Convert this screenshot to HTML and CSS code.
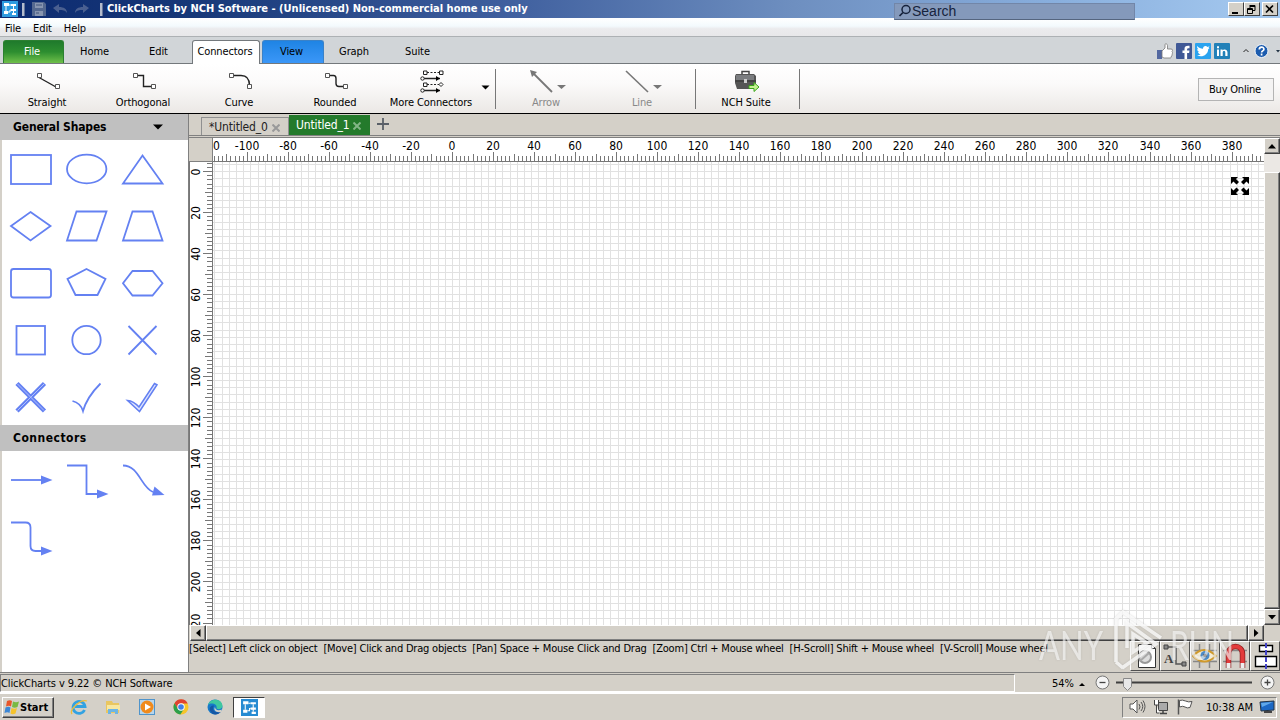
FILE: index.html
```
<!DOCTYPE html>
<html lang="en">
<head>
    <meta charset="UTF-8">
    <meta name="viewport" content="width=device-width, initial-scale=1.0">
    <title>ClickCharts by NCH Software</title>
    <link rel="stylesheet" href="styles.css">
</head>
<body>
<div class="desktop">

    <!-- Title bar -->
    <div class="titlebar">
        <svg class="app-icon" width="16" height="16" viewBox="0 0 16 16"><rect width="16" height="16" fill="#2f9be0"/><path d="M2 2h5v3H2zM9 3h5v2H9zM2 10h4v3H2zM9 8h5v2H9zM10 12h4v2h-4z" fill="#fff"/><path d="M4 5v5M7 4h2M11.500 5v7M6 11h2V9h1" stroke="#fff" fill="none"/></svg>
        <span class="title-sep"></span>
        <svg class="quick" width="66" height="18" viewBox="0 0 66 18">
            <path d="M2 2h12l2 2v12H2z" fill="#54688f"/><path d="M5 3h8v5H5zM5 11h8v5H5z" fill="#8795b0"/><path d="M6 5h6M6 13h3" stroke="#40547d"/>
            <path d="M23 8l6-4v3c5 0 8 2 8 6-2-3-4-3-8-3v3z" fill="#4a5f90"/>
            <path d="M59 8l-6-4v3c-5 0-8 2-8 6 2-3 4-3 8-3v3z" fill="#4a5f90"/>
        </svg>
        <span class="title-sep"></span>
        <span class="title-text">ClickCharts by NCH Software - (Unlicensed) Non-commercial home use only</span>
        <div class="window-buttons">
            <button><svg width="13" height="11" viewBox="0 0 13 11"><path d="M3 8h6v2H3z"/></svg></button>
            <button><svg width="13" height="11" viewBox="0 0 13 11"><path d="M5 1.500h5v5H8M5 2.500h5M5 1v3M2.500 4.500h5v5h-5zM2 5.500h6" fill="none" stroke="#000"/></svg></button>
            <button class="close"><svg width="13" height="11" viewBox="0 0 13 11"><path d="M3 1.500l7 7M10 1.500l-7 7" stroke="#000" stroke-width="1.700"/></svg></button>
        </div>
        <div class="search">
            <svg width="14" height="14" viewBox="0 0 14 14"><circle cx="8" cy="5.500" r="4" fill="none" stroke="#16233d" stroke-width="1.500"/><path d="M5 8.500L1.500 12" stroke="#16233d" stroke-width="1.700"/></svg>
            <span>Search</span>
        </div>
    </div>

    <div class="menubar"><span>File</span><span>Edit</span><span>Help</span></div>

    <!-- Ribbon tabs -->
    <div class="tabs">
        <span class="tab tab-file">File</span>
        <span class="tab tab-home">Home</span>
        <span class="tab tab-edit">Edit</span>
        <span class="tab tab-active">Connectors</span>
        <span class="tab tab-view">View</span>
        <span class="tab tab-graph">Graph</span>
        <span class="tab tab-suite">Suite</span>
        <div class="social">
            <svg width="16" height="16" viewBox="0 0 16 16"><path d="M0 7h5v9H0z" fill="#5368a0"/><path d="M5 14V8l3-3V1.500c0-1 2.500-1 2.500 1V6H14c2 0 2 2 1 2.500 1 1 .5 2 0 2.500.5 1 0 2-.7 2 .2 1.500-.5 2-1.300 2H7z" fill="#fff" stroke="#777" stroke-width=".8"/></svg>
            <svg width="16" height="16" viewBox="0 0 16 16"><rect width="16" height="16" rx="1" fill="#3f5896"/><path d="M8.500 16v-6H6.500V7.500h2V6c0-2.500 1.300-3.500 5-3.200v2.400c-2 0-2.400 0-2.400 1v1.300h2.400l-.4 2.500h-2v6z" fill="#fff"/></svg>
            <svg width="16" height="16" viewBox="0 0 16 16"><rect width="16" height="16" rx="1" fill="#2aa3ef"/><path d="M2 3c2 2 3.500 2.700 6 2.800C7.800 3 11 2 12.500 4l2-.7-1 1.700 1 0-1.300 1.300C13 12 7 15 2 12.300c1.500 0 2.600-.3 3.600-1C4 11 3.300 10 3 9h1.300C3 8.500 2.200 7.500 2.300 6l1.200.3C2 5 2 4 2 3z" fill="#fff"/></svg>
            <svg width="16" height="16" viewBox="0 0 16 16"><rect width="16" height="16" rx="1" fill="#2381b8"/><path d="M3 6.500h2V13H3zM3 3.300h2v2H3zM6.500 6.500h2v1c1-1.500 5-1.800 5 2V13h-2.200V9.500c0-2-2.600-1.700-2.600 0V13H6.500z" fill="#fff"/></svg>
            <svg class="collapse" width="8" height="16" viewBox="0 0 8 16"><path d="M1.500 9L4 6.500 6.500 9" fill="none" stroke="#222"/></svg>
            <svg class="help" width="15" height="16" viewBox="0 0 15 16"><circle cx="7.500" cy="8" r="6.500" fill="#1c5cae" stroke="#f2f6fb"/><path d="M5.300 6.500c0-3 4.600-3 4.600-.3 0 1.600-2.300 1.700-2.300 3.200M7.600 10.500v2" fill="none" stroke="#fff" stroke-width="1.700"/></svg>
            <svg width="6" height="16" viewBox="0 0 6 16"><path d="M1 7h4L3 9.500z" fill="#234"/></svg>
        </div>
    </div>

    <!-- Toolbar -->
    <div class="toolbar">
        <div class="tool"><svg width="26" height="24" viewBox="0 -1 26 24"><path d="M5 7.500l17 9.500" stroke="#222" stroke-width="1.400"/><path d="M3.500 3.500h4v4h-4zM21.500 14.500h4v4h-4z" fill="#fff" stroke="#555"/></svg><span>Straight</span></div>
        <div class="tool"><svg width="26" height="24" viewBox="0 -1 26 24"><path d="M7 5.500h6.500v11H22" fill="none" stroke="#222" stroke-width="1.400"/><path d="M3.500 3.500h4v4h-4zM21.500 14.500h4v4h-4z" fill="#fff" stroke="#555"/></svg><span>Orthogonal</span></div>
        <div class="tool"><svg width="26" height="24" viewBox="0 -1 26 24"><path d="M7 5.500h8c6 0 8.500 4 8.500 10" fill="none" stroke="#222" stroke-width="1.400"/><path d="M3.500 3.500h4v4h-4zM21.500 14.500h4v4h-4z" fill="#fff" stroke="#555"/></svg><span>Curve</span></div>
        <div class="tool"><svg width="26" height="24" viewBox="0 -1 26 24"><path d="M7 5.500h4.500q2.500 0 2.500 3v5q0 3 3 3h5" fill="none" stroke="#222" stroke-width="1.400"/><path d="M3.500 3.500h4v4h-4zM21.500 14.500h4v4h-4z" fill="#fff" stroke="#555"/></svg><span>Rounded</span></div>
        <div class="tool"><svg width="26" height="24" viewBox="-1 0 26 24"><path d="M8 3.500h13M8 15.500h13" stroke="#222" stroke-dasharray="2 1.500"/><path d="M4 9.500h17M4 21.500h17" stroke="#222" stroke-width="1.500"/><path d="M4.500 2h3.500v3.500H4.500zM20.500 2H24v3.500h-3.500zM4.500 14h3.500v3.500H4.500zM22 13.500l2 2-2 2-2-2z" fill="#fff" stroke="#222"/><circle cx="3.500" cy="9.500" r="1.700" fill="#fff" stroke="#222"/><circle cx="3.500" cy="21.500" r="1.700" fill="#fff" stroke="#222"/><path d="M17 7l4 2.500-4 2.500zM17 19l4 2.500-4 2.500z"/></svg><span>More Connectors</span></div>
        <svg class="drop" width="15" height="50" viewBox="0 0 15 50"><path d="M1.500 22.500h8L5.500 26.500z"/></svg>
        <span class="tool-sep"></span>
        <div class="tool disabled"><svg width="40" height="24" viewBox="0 0 40 24"><path d="M6 3l20 20" stroke="#777" stroke-width="1.800"/><path d="M4 1l7 2-5 5z" fill="#777"/><path d="M31 16h9l-4.500 4z" fill="#777"/></svg><span>Arrow</span></div>
        <div class="tool disabled"><svg width="40" height="24" viewBox="0 0 40 24"><path d="M4 2l22 21" stroke="#777" stroke-width="1.600"/><path d="M31 16h9l-4.500 4z" fill="#777"/></svg><span>Line</span></div>
        <span class="tool-sep gap"></span>
        <div class="tool"><svg width="26" height="24" viewBox="0 0 26 24"><path d="M9 5V2.500h7V5" fill="none" stroke="#444" stroke-width="1.500"/><path d="M3 5h18l2 2v7l-1 6H4L2 14V7z" fill="#555"/><path d="M3 6h18v5H3z" fill="#7b7d80"/><path d="M2 12h21" stroke="#333"/><path d="M11 10h3v4h-3z" fill="#ccc"/><path d="M16 16.500h5v-3l5 4.500-5 4.500v-3h-5z" fill="#c4f28f" stroke="#3aa51a"/></svg><span>NCH Suite</span></div>
        <span class="tool-sep gap"></span>
        <button class="buy">Buy Online</button>
    </div>

    <div class="main">
        <!-- Shape palette -->
        <div class="sidebar">
            <div class="side-head">General Shapes<svg width="10" height="6" viewBox="0 0 10 6"><path d="M0 0.500h10L5 5.500z"/></svg></div>
            <div class="shapes">
                <svg viewBox="0 0 56 57"><rect x="9" y="15" width="40" height="29"/></svg>
                <svg viewBox="0 0 56 57"><ellipse cx="28.700" cy="29" rx="19.700" ry="14.300"/></svg>
                <svg viewBox="0 0 56 57"><path d="M28.500 15.500L48.500 43.500H9z"/></svg>
                <svg viewBox="0 0 56 57"><path d="M28.500 15L48.500 29 28.500 43.500 9 29z"/></svg>
                <svg viewBox="0 0 56 57"><path d="M18.500 14.500h30l-10 29H9z"/></svg>
                <svg viewBox="0 0 56 57"><path d="M18.500 14.500h20l10 29H9z"/></svg>
                <svg viewBox="0 0 56 57"><rect x="9" y="15" width="40" height="28.500" rx="2.500"/></svg>
                <svg viewBox="0 0 56 57"><path d="M28.500 15L47.500 25 39.500 41h-22l-8-16z"/></svg>
                <svg viewBox="0 0 56 57"><path d="M18.500 17h20l10 12.200-10 12.300h-20L9 29.200z"/></svg>
                <svg viewBox="0 0 56 57"><rect x="14.500" y="15" width="28.500" height="28.500"/></svg>
                <svg viewBox="0 0 56 57"><circle cx="28.500" cy="29" r="14.200"/></svg>
                <svg viewBox="0 0 56 57"><path d="M14.500 15l28 28.500M42.500 15l-28 28.500"/></svg>
                <svg viewBox="0 0 56 57"><path class="thick" d="M15 15.500l27.500 27.500M42.500 15.500L15 43"/><path class="core" d="M15.500 16l26.500 26.500M42 16L15.500 42.500"/></svg>
                <svg viewBox="0 0 56 57"><path d="M14.500 33q8 2 10.500 10Q29 29 42.500 15.500"/></svg>
                <svg viewBox="0 0 56 57"><path class="check" d="M13.500 32.500q6 .5 11.500 6.500L40.500 15.500l2.500 1.200L25.500 43.500z"/></svg>
            </div>
            <div class="side-head side-connectors">Connectors</div>
            <div class="shapes">
                <svg viewBox="0 0 56 57"><path d="M9 29h32"/><path class="head" d="M39 24.500L50.500 29 39 33.500z"/></svg>
                <svg viewBox="0 0 56 57"><path d="M9 14.500h19.500v28.500H40"/><path class="head" d="M39 38.500L50.500 43 39 47.500z"/></svg>
                <svg viewBox="0 0 56 57"><path d="M9 14.500c16 0 18 22 30 26.500"/><path class="head" d="M40.500 35.500l10 8.500-12.500.5z"/></svg>
                <svg viewBox="0 0 56 57"><path d="M9 14.500h14.500q5 0 5 5V38q0 5 5 5H40"/><path class="head" d="M39 38.500L50.500 43 39 47.500z"/></svg>
            </div>
        </div>

        <!-- Drawing area -->
        <div class="work">
            <div class="doc-tabs">
                <span class="doc-tab">*Untitled_0<svg width="8" height="8" viewBox="0 0 8 8"><path d="M.5.500l7 7M7.500.500l-7 7"/></svg></span>
                <span class="doc-tab doc-active">Untitled_1<svg width="8" height="8" viewBox="0 0 8 8"><path d="M.5.500l7 7M7.500.500l-7 7"/></svg></span>
                <svg class="plus" width="12" height="12" viewBox="0 0 12 12"><path d="M6 0v12M0 6h12" stroke="#5a6068" stroke-width="1.800"/></svg>
            </div>
            <div class="canvas-grid">
                <div class="corner"></div>
                <svg class="ruler-h" id="rulerH" width="1051" height="24"></svg>
                <div class="scroll-v">
                    <span class="sbtn"><svg width="8" height="5" viewBox="0 0 8 5"><path d="M4 0l4 4.500H0z"/></svg></span>
                    <span class="track"></span>
                    <span class="thumb"></span>
                    <span class="sbtn"><svg width="8" height="5" viewBox="0 0 8 5"><path d="M0 0h8L4 4.500z"/></svg></span>
                </div>
                <svg class="ruler-v" id="rulerV" width="23" height="463"></svg>
                <div class="canvas">
                    <svg id="grid" width="1051" height="463"></svg>
                    <svg class="fullscreen" width="18" height="18" viewBox="0 0 18 18"><path d="M0 0h7L5 2l3 3-2.500 2.500L2.500 4.500 0 7zM18 0h-7l2 2-3 3 2.500 2.500 3-3L18 7zM0 18h7l-2-2 3-3-2.500-2.500-3 3L0 11zM18 18h-7l2-2-3-3 2.500-2.500 3 3L18 11z"/></svg>
                </div>
                <div class="scroll-h">
                    <span class="sbtn"><svg width="5" height="8" viewBox="0 0 5 8"><path d="M4.500 0v8L0 4z"/></svg></span>
                    <span class="thumb"></span>
                    <span class="sbtn"><svg width="5" height="8" viewBox="0 0 5 8"><path d="M0 0v8l4.500-4z"/></svg></span>
                </div>
            </div>
            <div class="hints">
                <span class="hint-text">[Select] Left click on object&nbsp; [Move] Click and Drag objects&nbsp; [Pan] Space + Mouse Click and Drag&nbsp; [Zoom] Ctrl + Mouse wheel&nbsp; [H-Scroll] Shift + Mouse wheel&nbsp; [V-Scroll] Mouse wheel</span>
                <div class="toggles">
                    <span><svg width="26" height="26" viewBox="0 0 26 26"><path d="M6.500 1.500h13l4 4v19h-17z" fill="#fff" stroke="#333"/><path d="M19.500 1.500v4h4" fill="none" stroke="#333"/><circle cx="13" cy="14" r="6" fill="#ddd" stroke="#999" stroke-width="2"/><path d="M8 18l9-8" stroke="#aaa" stroke-width="2"/></svg></span>
                    <span><svg width="26" height="26" viewBox="0 0 26 26"><path d="M5 4h9v17h8" fill="none" stroke="#555" stroke-width="1.500"/><path d="M2 2h4v4H2zM20 19h4v4h-4z" fill="#888" stroke="#444"/><text x="2" y="20" class="glyph">A</text></svg></span>
                    <span><svg width="26" height="26" viewBox="0 0 26 26"><path d="M7.500 1v24M17.500 1v24M1 7.500h24M1 18.500h24" stroke="#888" stroke-width="1.500"/><path d="M1 13q11-12 23 0-12 11-23 0z" fill="#f5ecd4" stroke="#d19a2b" stroke-width="1.800"/><circle cx="13" cy="12.500" r="4.500" fill="#4a8bc9"/><circle cx="13" cy="12.500" r="1.800"/></svg></span>
                    <span><svg width="26" height="26" viewBox="0 0 26 26"><path d="M1 7.500h24M1 18.500h24" stroke="#888" stroke-width="1.500"/><path d="M6.500 25V11c0-10 14-10 14 0v14" fill="none" stroke="#8f2020" stroke-width="5.500"/><path d="M6.500 20V11c0-10 14-10 14 0v9" fill="none" stroke="#e33b3b" stroke-width="4"/><path d="M4.500 20h4v5h-4zM18.500 20h4v5h-4z" fill="#eee"/></svg></span>
                    <span><svg width="26" height="26" viewBox="0 0 26 26"><path d="M7.500 2.500h13v6h-13zM3.500 13.500h21v10h-21z" fill="#fff" stroke="#000" stroke-width="1.400"/><path d="M14 0v26" stroke="#4444c8" stroke-width="2" stroke-dasharray="5 2"/></svg></span>
                </div>
            </div>
        </div>
    </div>

    <!-- Status bar -->
    <div class="status">
        <div class="status-text">ClickCharts v 9.22 © NCH Software</div>
        <div class="zoom">
            <span>54%</span>
            <svg width="208" height="18" viewBox="0 0 208 18">
                <path d="M1 11h6L4 8z"/>
                <circle cx="24.500" cy="7.500" r="6.500" fill="#f4f4f4" stroke="#777"/><path d="M21.500 7.500h6" stroke="#444" stroke-width="1.300"/>
                <path d="M38 7.500h136" stroke="#3f3f3f" stroke-width="1.800"/>
                <path d="M45.500 3.500h8v8l-4 4-4-4z" fill="#e8e8e8" stroke="#888"/>
                <circle cx="189.500" cy="7.500" r="6.500" fill="#f4f4f4" stroke="#777"/><path d="M186.500 7.500h6M189.500 4.500v6" stroke="#444" stroke-width="1.300"/>
            </svg>
        </div>
    </div>

    <!-- Taskbar -->
    <div class="taskbar">
        <button class="start"><svg width="16" height="16" viewBox="0 0 16 16"><path d="M3 2q3-1.500 5 0L7 7.500Q5 6 2 7.500z" fill="#e8562a"/><path d="M9 2.500q3 1.500 6 0L13.500 8q-3 1.500-5.500 0z" fill="#79b942"/><path d="M1.500 8.500q3-1.500 5 0l-1 5.500q-2-1.500-5 0z" fill="#3c87d6"/><path d="M7.500 9q3 1.500 5.500 0l-1.500 5.500q-3 1.500-5 0z" fill="#f5c32c"/></svg>Start</button>
        <div class="launch">
            <svg width="18" height="18" viewBox="0 0 18 18"><path d="M14.500 12A6 6 0 1 1 15 8.500H5" fill="none" stroke="#32a2e2" stroke-width="2.800"/><path d="M2 16C-1 12 10 1 17 3" fill="none" stroke="#efbd37" stroke-width="1.300"/></svg>
            <svg width="18" height="18" viewBox="0 0 18 18"><path d="M2 3h6l1 2h6v10H2z" fill="#e9c660"/><path d="M3 7h13v5H3z" fill="#f8e7a0"/><path d="M4 16v-5h10v5h-3v-2H7v2z" fill="#6db5e4"/></svg>
            <svg width="18" height="18" viewBox="0 0 18 18"><rect x="1.500" y="1.500" width="15" height="15" fill="#b7d5ec" stroke="#4f94cb"/><circle cx="9" cy="9" r="6.500" fill="#f08a1c"/><path d="M7 5.500l6 3.500-6 3.500z" fill="#fff"/></svg>
            <svg width="18" height="18" viewBox="0 0 18 18"><circle cx="9" cy="9" r="7.500" fill="#f6c52b"/><path d="M2.500 5.200A7.500 7.500 0 0 1 15.800 5.500H9L5.700 11z" fill="#df4232"/><path d="M2.500 5.200A7.500 7.500 0 0 0 8.300 16.500L12 11H6z" fill="#2c9f4b"/><circle cx="9" cy="9" r="3.700" fill="#fff"/><circle cx="9" cy="9" r="2.800" fill="#3f7fe8"/></svg>
            <svg width="18" height="18" viewBox="0 0 18 18"><circle cx="9" cy="9" r="7.500" fill="#1679c9"/><path d="M2 7C4 0 16 0 16.500 8c0 3-4 4-6 2.500C12 6 5 4 2 7z" fill="#3fc7a0"/><path d="M7 10c0 4 4 5 8 3.500-3 4-9 4-11-1-1-3 1-5 4-5z" fill="#1557a4"/><path d="M9 9c0 3 3 4 7 2.500L15 14c-5 1-8-2-6-5z" fill="#d4d0c8"/></svg>
        </div>
        <div class="task-active"><svg width="17" height="17" viewBox="0 0 16 16"><rect width="16" height="16" fill="#278bd2"/><path d="M2 2h5v3H2zM9 3h5v2H9zM2 10h4v3H2zM9 8h5v2H9zM10 12h4v2h-4z" fill="#fff"/><path d="M4 5v5M7 4h2M11.500 5v7M6 11h2V9h1" stroke="#fff" fill="none"/></svg></div>
        <div class="tray">
            <svg width="18" height="18" viewBox="0 0 18 18"><path d="M2 6h3l4-4v13l-4-4H2z" fill="#fff" stroke="#555"/><path d="M11 6q2 3 0 5.500M13 4q3.500 4.500 0 9M15 2.500q4 6 0 12" fill="none" stroke="#555"/></svg>
            <svg width="18" height="18" viewBox="0 0 18 18"><path d="M6.500 4.500h9v8h-9z" fill="#aaa" stroke="#444"/><path d="M8 15.500h7M11 13v2" stroke="#444" stroke-width="1.500"/><path d="M2.500 2v5h4V2M4.500 7v8h3" fill="#fff" stroke="#444"/></svg>
            <svg width="18" height="18" viewBox="0 0 18 18"><path d="M2.500 1.500v15" stroke="#555" stroke-width="1.500"/><path d="M3.500 2.500q3-1 6 .5t6.500.5l-2 6q-3 1-5-.5t-5.500 0z" fill="#fff" stroke="#555"/></svg>
            <span>10:38 AM</span>
            <svg width="17" height="16" viewBox="0 0 17 16"><path d="M1 3l14-1v9l-13 1z" fill="#1c68c4" stroke="#234"/><path d="M2 4l12-1-11 5z" fill="#5fa8ea"/><path d="M5 13h8" stroke="#444" stroke-width="2"/></svg>
        </div>
    </div>

    <!-- Watermark over the lower right corner -->
    <svg class="watermark" width="204" height="66" viewBox="0 0 204 66">
        <text x="3" y="53" textLength="64" lengthAdjust="spacingAndGlyphs">ANY</text>
        <text x="134" y="53" textLength="64" lengthAdjust="spacingAndGlyphs">RUN</text>
        <path d="M80 55V12L87 5l38 26M91 41V16l29 21-34 24M80 55l7 6M97 27v18l14-9z"/>
    </svg>
</div>

<script>
    // pixels per ruler unit and where zero falls, relative to the canvas corner
    const UNIT = 2.0515;
    const ZERO_X = 239.5;
    const ZERO_Y = 9.7;
    const STEP = 7.2;

    function line(x1, y1, x2, y2) {
        return `M${x1} ${y1}L${x2} ${y2}`;
    }

    function snap(v) {
        return Math.floor(v) + 0.5;
    }

    function drawRulerH() {
        let d = "", labels = "";
        for (let n = -116; n <= 394; n += 2) {
            const x = snap(ZERO_X + n * UNIT);
            const len = n % 20 === 0 ? 9 : n % 10 === 0 ? 7 : 5;
            d += line(x, 23, x, 23 - len);
            if (n % 20 === 0) labels += `<text x="${x - 0.5}" y="12" text-anchor="middle">${n}</text>`;
        }
        labels += `<text x="0" y="12">0</text>`;
        document.getElementById("rulerH").innerHTML = `<path d="${d}"/>${labels}`;
    }

    function drawRulerV() {
        let d = "", labels = "";
        for (let n = -4; n <= 220; n += 2) {
            const y = snap(ZERO_Y + n * UNIT);
            const len = n % 20 === 0 ? 9 : n % 10 === 0 ? 7 : 5;
            d += line(22, y, 22 - len, y);
            if (n % 20 === 0) labels += `<text transform="translate(10 ${y + 0.5}) rotate(-90)" text-anchor="middle">${n}</text>`;
        }
        document.getElementById("rulerV").innerHTML = `<path d="${d}"/>${labels}`;
    }

    function drawGrid() {
        let d = "";
        for (let x = ZERO_X - 33 * STEP; x < 1051; x += STEP) d += line(snap(x), 0, snap(x), 463);
        for (let y = ZERO_Y - STEP; y < 463; y += STEP) d += line(0, snap(y), 1051, snap(y));
        document.getElementById("grid").innerHTML = `<path d="${d}"/>`;
    }

    drawRulerH();
    drawRulerV();
    drawGrid();
</script>
</body>
</html>
```
FILE: styles.css
```
* {
    box-sizing: border-box;
}
body {
    margin: 0;
    font-family: "DejaVu Sans Condensed", "DejaVu Sans", sans-serif;
    font-size: 11px;
    color: #000;
    overflow: hidden;
}
svg {
    display: block;
    flex: none;
}
button {
    font: inherit;
    padding: 0;
    border-radius: 0;
}
.desktop {
    position: relative;
    width: 1280px;
    height: 720px;
    display: flex;
    flex-direction: column;
    background: #d4d0c8;
    white-space: nowrap;
}

/* Title bar */
.titlebar {
    position: relative;
    height: 18px;
    flex: none;
    display: flex;
    align-items: center;
    padding: 0 2px;
    background: linear-gradient(90deg, #0c2a70 0%, #173878 15%, #3c5c9c 38%, #6e8fc0 62%, #88aedd 82%, #a6caf0 100%);
}
.title-sep {
    width: 3px;
    height: 13px;
    margin-left: 4px;
    background: #b4bccd;
    border-right: 1px solid #66769a;
}
.quick {
    margin-left: 5px;
}
.title-text {
    margin-left: 4px;
    padding-bottom: 2px;
    color: #fff;
    font-weight: bold;
}
.window-buttons {
    display: flex;
    margin-left: auto;
}
.window-buttons button {
    width: 16px;
    height: 14px;
    background: #d4d0c8;
    border: 1px solid;
    border-color: #fff #404040 #404040 #fff;
}
.window-buttons .close {
    margin-left: 2px;
}
.search {
    position: absolute;
    z-index: 2;
    left: 894px;
    top: 3px;
    width: 241px;
    height: 17px;
    display: flex;
    align-items: center;
    padding: 0 0 1px 3px;
    background: #8499bb;
    border: 1px solid #7286a8;
    border-bottom-color: #55657f;
    color: #16233d;
    font: 14px "Liberation Sans", Arial, sans-serif;
}

.menubar {
    height: 18px;
    flex: none;
    display: flex;
    align-items: center;
    gap: 12px;
    padding: 2px 0 0 5px;
    letter-spacing: -0.1px;
    background: linear-gradient(#fff, #f3fafd 45%, #ebebed 60%, #e8e8ea);
}

/* Ribbon tabs */
.tabs {
    height: 28px;
    flex: none;
    display: flex;
    align-items: flex-end;
    padding-left: 3px;
    background: #d1d5d8;
    border-top: 1px solid #adb1b4;
    border-bottom: 1px solid #73787c;
}
.tab {
    height: 23px;
    line-height: 24px;
    text-align: center;
    border-radius: 3px 3px 0 0;
    letter-spacing: -0.1px;
}
.tab-file {
    width: 61px;
    color: #fff;
    background: linear-gradient(#1f7a2c, #2d8e30 50%, #6fc04a);
    border: 1px solid #2b8031;
    border-bottom: none;
    line-height: 22px;
    padding-right: 3px;
}
.tab-home {
    width: 61px;
}
.tab-edit {
    width: 67px;
}
.tab-active {
    width: 68px;
    height: 24px;
    margin-bottom: -1px;
    padding-right: 2px;
    background: #fff;
    border: 1px solid #73787c;
    border-bottom: none;
    line-height: 22px;
}
.tab-view {
    width: 62px;
    margin-left: 2px;
    padding-right: 3px;
    background: linear-gradient(#1f84e4, #3b97f8);
    border: 1px solid #3a82c8;
    border-bottom: none;
    line-height: 22px;
}
.tab-graph {
    width: 60px;
}
.tab-suite {
    width: 67px;
}
.social {
    display: flex;
    align-items: center;
    gap: 3px;
    height: 24px;
    margin-left: auto;
    margin-right: -1px;
}
.social .collapse {
    margin-left: 9px;
}
.social .help {
    margin: 0 3px 0 1px;
}

/* Toolbar */
.toolbar {
    height: 50px;
    flex: none;
    display: flex;
    align-items: center;
    background: linear-gradient(#fff, #fbfafa 40%, #ebe8e5);
    border-bottom: 1px solid #000;
    padding-right: 6px;
}
.tool {
    width: 96px;
    display: flex;
    flex-direction: column;
    align-items: center;
    gap: 3px;
    margin: 2px 1px 0 -1px;
}
.tool span {
    line-height: 14px;
    letter-spacing: -0.1px;
}
.tool.disabled {
    color: #888;
}
.drop {
    position: relative;
    top: -1px;
}
.tool-sep {
    width: 1px;
    height: 40px;
    margin-right: 3px;
    background: #777;
}
.tool-sep.gap {
    margin-left: 4px;
}
.buy {
    width: 76px;
    height: 23px;
    margin: 2px 0 0 auto;
    padding-right: 2px;
    letter-spacing: -0.2px;
    background: #f4f3f3;
    border: 1px solid #b4b4b4;
}

.main {
    height: 558px;
    flex: none;
    display: flex;
}

/* Shape palette */
.sidebar {
    width: 189px;
    flex: none;
    background: #fff;
    border-left: 2px solid #d4d0c8;
    border-right: 1px solid #808080;
}
.side-head {
    height: 26px;
    margin-left: -2px;
    padding: 0 25px 0 13px;
    display: flex;
    align-items: center;
    justify-content: space-between;
    background: #c0c0c0;
    font-size: 12px;
    font-weight: bold;
    letter-spacing: -0.15px;
}
.side-connectors {
    letter-spacing: 0.5px;
}
.shapes {
    display: grid;
    grid-template-columns: repeat(3, 56px);
    grid-auto-rows: 57px;
}
.shapes svg {
    width: 56px;
    height: 57px;
    fill: none;
    stroke: #6481f2;
    stroke-width: 1.8;
}
.shapes .thick {
    stroke-width: 4.5;
}
.shapes .core {
    stroke: #b9c6ff;
    stroke-width: 0.9;
}
.shapes .check {
    fill: #dfe5ff;
    stroke-width: 1.5;
}
.shapes .head {
    fill: #6481f2;
    stroke: none;
}

/* Document tabs */
.work {
    flex: 1;
    min-width: 0;
    display: flex;
    flex-direction: column;
}
.doc-tabs {
    height: 24px;
    flex: none;
    display: flex;
    align-items: flex-end;
    padding: 0 0 2px 12px;
    border-bottom: 1px solid #808080;
    box-shadow: inset 0 -1px #d4d0c8, inset 0 -2px #808080;
}
.doc-tab {
    height: 18px;
    width: 88px;
    display: flex;
    align-items: center;
    justify-content: space-between;
    padding: 1px 8px 0 7px;
    border: 1px solid #909090;
    border-bottom: none;
    color: #222;
    font-size: 12px;
    letter-spacing: -0.15px;
}
.doc-tab svg {
    margin-top: 2px;
    stroke: #999;
    stroke-width: 2;
}
.doc-active {
    width: 81px;
    height: 20px;
    padding: 0 8px 1px 6px;
    background: #247a2b;
    border-color: #247a2b;
    color: #fff;
}
.doc-active svg {
    stroke: #83b586;
}
.plus {
    margin: 0 0 5px 7px;
}

/* Rulers and canvas */
.canvas-grid {
    display: grid;
    grid-template-columns: 24px 1051px 16px;
    grid-template-rows: 24px 463px 16px;
}
.corner {
    border-bottom: 1px solid #808080;
    border-right: 1px solid #808080;
}
.ruler-h,
.ruler-v {
    background: #fff;
    font-size: 12px;
}
.ruler-h path,
.ruler-v path {
    stroke: #777;
}
.ruler-h {
    border-bottom: 1px solid #777;
}
.ruler-v {
    width: 24px;
    border-right: 1px solid #777;
    border-left: 1px solid #777;
}
.canvas {
    position: relative;
    background: #fff;
}
.canvas path {
    stroke: #e1e1e1;
}
.canvas .fullscreen {
    position: absolute;
    right: 15px;
    top: 15px;
}
.fullscreen path {
    stroke: none;
}

/* Scroll bars */
.scroll-v {
    grid-row: 1 / 3;
    grid-column: 3;
    display: flex;
    flex-direction: column;
}
.scroll-h {
    grid-column: 1 / 3;
    display: flex;
    padding-left: 1px;
}
.sbtn,
.thumb {
    background: #d4d0c8;
    border: 1px solid;
    border-color: #fff #404040 #404040 #fff;
    box-shadow: inset -1px -1px #808080;
}
.sbtn {
    width: 16px;
    height: 16px;
    flex: none;
    display: flex;
    align-items: center;
    justify-content: center;
}
.thumb {
    flex: 1;
}
.track {
    height: 18px;
    background: #ebe8e4;
}

/* Hint line */
.hints {
    height: 31px;
    display: flex;
    justify-content: space-between;
}
.hint-text {
    line-height: 15px;
    letter-spacing: -0.2px;
}
.toggles {
    display: flex;
}
.toggles span {
    width: 30px;
    height: 30px;
    padding: 1px;
    border: 1px solid;
    border-color: #fff #505050 #505050 #fff;
}
.glyph {
    font: bold 13px "Liberation Serif", serif;
    fill: #444;
}

/* Status bar */
.status {
    height: 21px;
    flex: none;
    display: flex;
    border-top: 1px solid #808080;
    border-bottom: 1px solid #fff;
}
.status-text {
    width: 1015px;
    margin-top: 1px;
    line-height: 18px;
    letter-spacing: -0.1px;
    border: 1px solid;
    border-color: #808080 #fff #fff #808080;
}
.zoom {
    display: flex;
    align-items: center;
    justify-content: flex-end;
    flex: 1;
    gap: 4px;
    padding-top: 2px;
    margin-right: -6px;
}

/* Taskbar */
.taskbar {
    height: 27px;
    flex: none;
    display: flex;
    align-items: center;
    padding: 0 3px 0 2px;
    border-top: 1px solid #fff;
}
.start {
    width: 52px;
    height: 21px;
    display: flex;
    align-items: center;
    padding-left: 1px;
    background: #d4d0c8;
    border: 1px solid;
    border-color: #fff #404040 #404040 #fff;
    box-shadow: inset -1px -1px #808080;
    font-weight: bold;
}
.launch {
    display: flex;
    gap: 16px;
    margin-left: 16px;
}
.task-active {
    width: 32px;
    height: 21px;
    margin-left: 9px;
    display: flex;
    justify-content: center;
    align-items: center;
    background: #fff;
    border: 1px solid;
    border-color: #404040 #fff #fff #404040;
}
.tray {
    width: 155px;
    height: 21px;
    margin-left: auto;
    display: flex;
    align-items: center;
    gap: 6px;
    padding-left: 5px;
    border: 1px solid;
    border-color: #808080 #fff #fff #808080;
}
.tray span {
    margin-left: 6px;
}

.watermark {
    position: absolute;
    left: 1036px;
    top: 607px;
    font: 400 41px Lato, sans-serif;
    fill: rgba(255, 255, 255, 0.6);
    filter: drop-shadow(0 0 1px rgba(120, 120, 120, 0.35));
}
.watermark path {
    fill: none;
    stroke: rgba(255, 255, 255, 0.75);
    stroke-width: 3.5;
}
```
